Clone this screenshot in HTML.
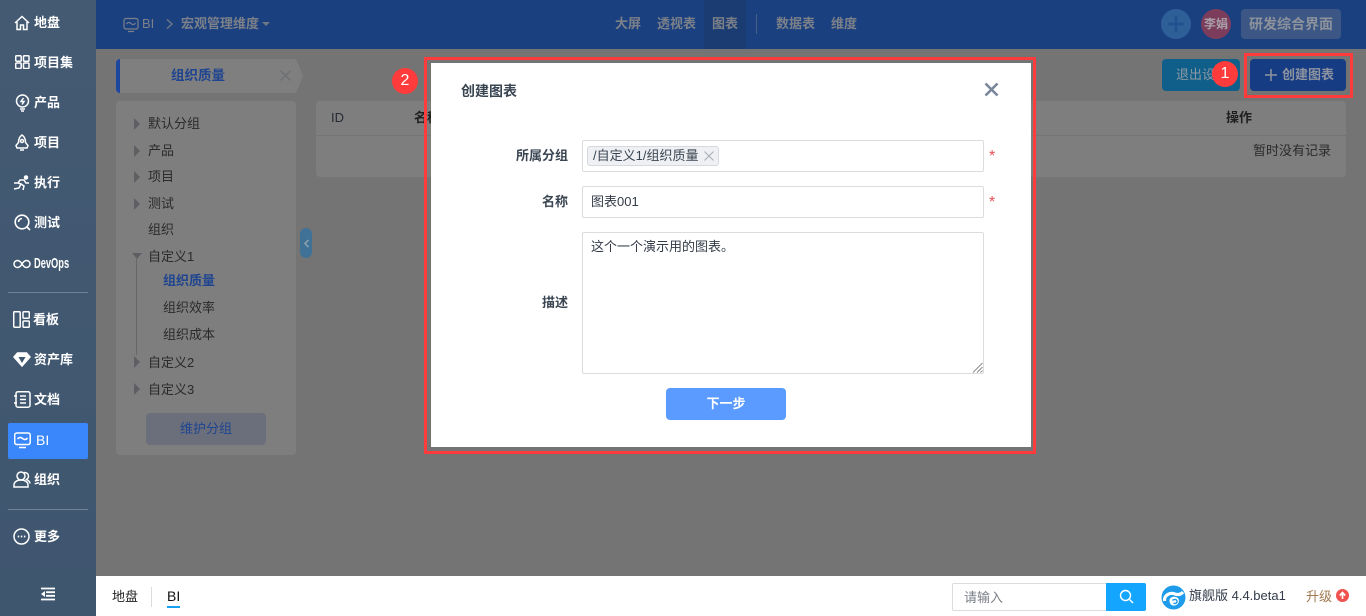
<!DOCTYPE html>
<html lang="zh"><head><meta charset="utf-8"><title>BI</title>
<style>
*{box-sizing:border-box}
html,body{margin:0;padding:0;width:1366px;height:616px;overflow:hidden;background:#747474}
body{font-family:"Liberation Sans","Noto Sans CJK SC",sans-serif;font-size:13px;color:#2b2b2b;position:relative}
.a{position:absolute;white-space:nowrap;line-height:18px}
.side{position:absolute;left:0;top:0;width:96px;height:616px;background:linear-gradient(#445a73,#3f566f)}
.n{position:absolute;left:34px;color:#fff;font-weight:bold;font-size:13px;line-height:18px;white-space:nowrap}
.side svg{position:absolute;fill:none;stroke:#fff;stroke-width:1.5}
.t{position:absolute;left:148px;color:#2a2a2a;line-height:18px;white-space:nowrap}
.arr{position:absolute;left:134px;width:0;height:0;border-left:6px solid #5d5f63;border-top:6px solid transparent;border-bottom:6px solid transparent}
.top{position:absolute;left:96px;top:0;width:1270px;height:49px;background:#1a4080}
.tn{position:absolute;top:15px;color:#7c8088;font-weight:bold;line-height:18px;white-space:nowrap}
.lbl{position:absolute;font-weight:bold;color:#3a4552;line-height:18px;white-space:nowrap;text-align:right;width:80px}
.inp{position:absolute;left:151px;width:402px;background:#fff;border:1px solid #dcdcdc;border-radius:2px}
.star{position:absolute;left:558px;color:#e8505b;font-size:16px;line-height:18px}
</style></head><body>

<div class="top"></div>
<div style="position:absolute;left:704px;top:0;width:42px;height:49px;background:#1b3c73"></div>
<svg style="position:absolute;left:123px;top:17px" width="16" height="16" viewBox="0 0 16 16" fill="none" stroke="#7c8088" stroke-width="1.2"><rect x="1" y="1.5" width="14" height="10.5" rx="2"/><path d="M3.5 7c1.5-2 3-2 4.5-.5s3 1.500 4.500-.5M5 14.500h6"/></svg>
<div class="a" style="left:142px;top:15px;color:#7c8088">BI</div>
<svg style="position:absolute;left:165px;top:18px" width="10" height="12" viewBox="0 0 10 12" fill="none" stroke="#6e7784" stroke-width="1.500"><path d="M2 1.500l5 4.500-5 4.500"/></svg>
<div class="tn" style="left:181px">宏观管理维度</div>
<div style="position:absolute;left:262px;top:22px;width:0;height:0;border-top:4px solid #6e7784;border-left:4px solid transparent;border-right:4px solid transparent"></div>
<div class="tn" style="left:615px">大屏</div>
<div class="tn" style="left:657px">透视表</div>
<div class="tn" style="left:712px">图表</div>
<div style="position:absolute;left:756px;top:14px;width:1px;height:20px;background:#47608a"></div>
<div class="tn" style="left:776px">数据表</div>
<div class="tn" style="left:831px">维度</div>
<div style="position:absolute;left:1161px;top:9px;width:30px;height:30px;border-radius:50%;background:#2e5f97"></div>
<svg style="position:absolute;left:1167px;top:15px" width="18" height="18" viewBox="0 0 18 18" stroke="#20508f" stroke-width="2.4"><path d="M9 1v16M1 9h16"/></svg>
<div style="position:absolute;left:1201px;top:9px;width:30px;height:30px;border-radius:50%;background:#7c3c5c;color:#a9a0aa;font-size:12px;font-weight:bold;line-height:30px;text-align:center">李娟</div>
<div style="position:absolute;left:1241px;top:9px;width:100px;height:30px;border-radius:4px;background:#3c5786;color:#8d929b;font-size:14px;font-weight:bold;line-height:30px;text-align:center">研发综合界面</div>

<div class="side">
<svg style="left:14px;top:15px" width="16" height="16" viewBox="0 0 16 16"><path d="M1 8l7-6.500L15 8M3 7v7.500h3.500V10h3v4.500H13V7"/></svg><div class="n" style="top:14px">地盘</div>
<svg style="left:15px;top:55px" width="15" height="14" viewBox="0 0 15 14"><rect x=".7" y=".7" width="5.500" height="5.500" rx="1"/><rect x="8.500" y=".7" width="5.500" height="5.500" rx="1"/><rect x=".7" y="8" width="5.500" height="5.500" rx="1"/><rect x="8.500" y="8" width="5.500" height="5.500" rx="1"/></svg><div class="n" style="top:54px">项目集</div>
<svg style="left:15px;top:94px" width="15" height="18" viewBox="0 0 15 18"><circle cx="7.500" cy="7" r="6"/><path d="M5 15h5M6 17h3M8.500 4L6 7.500h3L7 10.500"/></svg><div class="n" style="top:94px">产品</div>
<svg style="left:14px;top:134px" width="16" height="18" viewBox="0 0 16 18"><path d="M8 1c3 2 3.500 5 3.500 7.500l2.500 3-1 2.500H3l-1-2.500 2.500-3C4.500 6 5 3 8 1z"/><circle cx="8" cy="7" r="1.500"/><path d="M6 16h4"/></svg><div class="n" style="top:134px">项目</div>
<svg style="left:13px;top:175px" width="18" height="16" viewBox="0 0 18 16"><circle cx="13" cy="2.500" r="1.500" fill="#fff"/><path d="M1 14l5-1 2-4-3-1 2-3 4 0 2 3h3M8 9l3 2-1 4M1 8h4"/></svg><div class="n" style="top:174px">执行</div>
<svg style="left:14px;top:214px" width="17" height="17" viewBox="0 0 17 17"><circle cx="8" cy="8" r="6.800" stroke-width="1.600"/><path d="M4.500 8A3.500 3.500 0 0 1 8 4.500M12.500 12.500l3.500 3.500" stroke-width="1.600"/></svg><div class="n" style="top:214px">测试</div>
<svg style="left:13px;top:259px" width="18" height="10" viewBox="0 0 18 10"><path d="M9 5C7.500 2.500 6 1.500 4.500 1.500a3.500 3.500 0 0 0 0 7C6 8.500 7.500 7.500 9 5c1.500-2.500 3-3.500 4.500-3.500a3.500 3.500 0 0 1 0 7C12 8.500 10.500 7.500 9 5z"/></svg><div class="n" style="top:255px;font-family:'Liberation Sans',sans-serif;transform:scaleX(.62);transform-origin:0 50%;font-size:15px">DevOps</div>
<div style="position:absolute;left:8px;top:292px;width:80px;height:1px;background:#6f8296"></div>
<svg style="left:13px;top:311px" width="17" height="17" viewBox="0 0 17 17"><rect x=".7" y=".7" width="6.500" height="15.500" rx="1"/><rect x="10" y=".7" width="6.300" height="6.500" rx="1"/><rect x="10" y="10" width="6.300" height="6.300" rx="1"/></svg><div class="n" style="top:311px;left:33px">看板</div>
<svg style="left:13px;top:352px" width="18" height="15" viewBox="0 0 18 15"><path d="M4.500 1h9L17 5l-8 9L1 5z" fill="#fff"/><path d="M5.500 5h7L9 11z" fill="#3f566f" stroke="none"/></svg><div class="n" style="top:351px">资产库</div>
<svg style="left:13px;top:391px" width="18" height="17" viewBox="0 0 18 17"><rect x="3" y=".7" width="14" height="15.500" rx="2"/><path d="M7 5h6M7 8.500h6M7 12h6M1 5h3M1 12h3"/></svg><div class="n" style="top:391px">文档</div>
<div style="position:absolute;left:8px;top:423px;width:80px;height:36px;background:#3a87fc;border-radius:2px"></div>
<svg style="left:14px;top:432px" width="17" height="17" viewBox="0 0 17 17"><rect x=".7" y="1" width="15.500" height="11.500" rx="2"/><path d="M3.500 7c1.500-2 3-2 5-.5s3.500 1.500 5-.5M5 15.500h7"/></svg><div class="n" style="top:431px;left:36px;font-weight:normal;font-size:14px">BI</div>
<svg style="left:13px;top:471px" width="18" height="17" viewBox="0 0 18 17"><circle cx="8" cy="5" r="4"/><path d="M1 16v-2c0-3 3-5 7-5s7 2 7 5v2zM11 1.500c3 0 4.500 1.500 4.500 3.500 0 1.500-.5 2.500-2 3.500 2 1 3.500 2 3.500 4"/></svg><div class="n" style="top:471px">组织</div>
<div style="position:absolute;left:8px;top:509px;width:80px;height:1px;background:#6f8296"></div>
<svg style="left:13px;top:528px" width="17" height="17" viewBox="0 0 17 17"><circle cx="8.500" cy="8.500" r="7.500"/><path d="M4.700 8.500h1.500M7.800 8.500h1.500M10.900 8.500h1.500" stroke-width="1.800"/></svg><div class="n" style="top:528px">更多</div>
<svg style="left:40px;top:587px" width="16" height="14" viewBox="0 0 16 14"><path d="M1 1.500h14M6 5.200h9M6 8.800h9M1 12.500h14" stroke-width="1.800"/><path d="M5 4L1 7l4 3z" fill="#fff" stroke="none"/></svg>
</div>

<!-- tabs -->
<div style="position:absolute;left:116px;top:59px;width:187px;height:34px;background:#7f7f7f;border-radius:4px;clip-path:polygon(0 0,180px 0,100% 50%,180px 100%,0 100%)"></div>
<div style="position:absolute;left:116px;top:59px;width:4px;height:34px;background:#1d479d;border-radius:4px 0 0 4px"></div>
<div class="a" style="left:171px;top:67px;color:#1f4490;font-weight:bold;font-size:13.500px">组织质量</div>
<svg style="position:absolute;left:280px;top:70px" width="11" height="11" viewBox="0 0 11 11" stroke="#696b70" stroke-width="1"><path d="M.5.500l10 10M10.500.500l-10 10"/></svg>

<!-- tree -->
<div style="position:absolute;left:116px;top:101px;width:180px;height:354px;background:#7e7e7e;border-radius:4px"></div>
<div class="arr" style="top:118px"></div><div class="t" style="top:115px">默认分组</div>
<div class="arr" style="top:145px"></div><div class="t" style="top:142px">产品</div>
<div class="arr" style="top:171px"></div><div class="t" style="top:168px">项目</div>
<div class="arr" style="top:198px"></div><div class="t" style="top:195px">测试</div>
<div class="t" style="top:221px">组织</div>
<div style="position:absolute;left:132px;top:253px;width:0;height:0;border-top:6px solid #5d5f63;border-left:5.500px solid transparent;border-right:5.500px solid transparent"></div>
<div style="position:absolute;left:136px;top:259px;width:1px;height:96px;background:#676767"></div>
<div class="t" style="top:248px">自定义1</div>
<div class="t" style="left:163px;top:272px;color:#1f4490;font-weight:bold">组织质量</div>
<div class="t" style="left:163px;top:299px">组织效率</div>
<div class="t" style="left:163px;top:326px">组织成本</div>
<div class="arr" style="top:356px"></div><div class="t" style="top:354px">自定义2</div>
<div class="arr" style="top:383px"></div><div class="t" style="top:381px">自定义3</div>
<div style="position:absolute;left:146px;top:413px;width:120px;height:32px;background:#6b6f7b;border-radius:4px;color:#1f4490;line-height:31px;text-align:center">维护分组</div>

<div style="position:absolute;left:300px;top:228px;width:12px;height:30px;border-radius:6px;background:#3f7296"></div>
<svg style="position:absolute;left:303px;top:239px" width="7" height="9" viewBox="0 0 7 9" fill="none" stroke="#8fa2b0" stroke-width="1.500"><path d="M5.500 1L2 4.500 5.500 8"/></svg>

<!-- table -->
<div style="position:absolute;left:316px;top:101px;width:1030px;height:76px;background:#7e7e7e;border-radius:4px"></div>
<div style="position:absolute;left:316px;top:135px;width:1030px;height:1px;background:#747474"></div>
<div class="a" style="left:331px;top:109px;color:#252a33">ID</div>
<div class="a" style="left:414px;top:109px;font-weight:bold;color:#1f1f1f">名称</div>
<div class="a" style="left:1226px;top:109px;font-weight:bold;color:#1f1f1f">操作</div>
<div class="a" style="left:1253px;top:142px">暂时没有记录</div>

<!-- top right buttons -->
<div style="position:absolute;left:1162px;top:59px;width:78px;height:32px;background:#0f5f8a;border-radius:4px;color:#8c98a3;line-height:31px;padding-left:14px;overflow:hidden;white-space:nowrap">退出设计</div>
<div style="position:absolute;left:1250px;top:59px;width:96px;height:32px;background:#163c84;border-radius:4px;color:#8d939f;font-weight:bold;line-height:31px;padding-left:32px;white-space:nowrap">创建图表</div>
<svg style="position:absolute;left:1265px;top:69px" width="12" height="12" viewBox="0 0 12 12" stroke="#8d939f" stroke-width="1.500"><path d="M6 0v12M0 6h12"/></svg>
<div style="position:absolute;left:1244px;top:53px;width:109px;height:45px;border:3.500px solid #ff3b3b"></div>
<div style="position:absolute;left:1212px;top:61px;width:26px;height:26px;border-radius:50%;background:#ff3b3b;color:#fff;font-size:16px;line-height:25px;text-align:center">1</div>
<div style="position:absolute;left:392px;top:68px;width:26px;height:26px;border-radius:50%;background:#ff3b3b;color:#fff;font-size:16px;line-height:25px;text-align:center">2</div>

<!-- modal -->
<div style="position:absolute;left:424px;top:57px;width:612px;height:397px;border:3.500px solid #ff3b3b"></div>
<div style="position:absolute;left:431px;top:63px;width:600px;height:384px;background:#fff">
<div class="a" style="left:30px;top:19px;font-weight:bold;color:#3a4552;font-size:14px">创建图表</div>
<svg style="position:absolute;left:553px;top:19px" width="15" height="15" viewBox="0 0 15 15" stroke="#79879b" stroke-width="2.600"><path d="M1.500 1.500l12 12M13.500 1.500l-12 12"/></svg>
<div class="lbl" style="left:57px;top:84px">所属分组</div>
<div class="inp" style="top:77px;height:32px"></div>
<div style="position:absolute;left:156px;top:83px;width:132px;height:20px;background:#eef0f3;border:1px solid #d6d9de;border-radius:3px;color:#3a4552;line-height:18px;padding-left:5px;white-space:nowrap">/自定义1/组织质量</div>
<svg style="position:absolute;left:273px;top:88px" width="10" height="10" viewBox="0 0 10 10" stroke="#a7adb5" stroke-width="1"><path d="M.5.500l9 9M9.500.500l-9 9"/></svg>
<div class="star" style="top:85px">*</div>
<div class="lbl" style="left:57px;top:130px">名称</div>
<div class="inp" style="top:123px;height:32px;line-height:30px;padding-left:8px;color:#333b47">图表001</div>
<div class="star" style="top:131px">*</div>
<div class="lbl" style="left:57px;top:231px">描述</div>
<div class="inp" style="top:169px;height:142px;line-height:18px;padding:5px 8px;color:#333b47">这个一个演示用的图表。</div>
<svg style="position:absolute;left:541px;top:299px" width="11" height="11" viewBox="0 0 11 11" stroke="#666" stroke-width=".8"><path d="M1 10.500L10.500 1M5 10.500L10.500 5M8.500 10.500l2-2"/></svg>
<div style="position:absolute;left:235px;top:325px;width:120px;height:32px;border-radius:4px;background:#5b9bff;color:#fff;font-weight:bold;line-height:31px;text-align:center">下一步</div>
</div>

<!-- footer -->
<div style="position:absolute;left:96px;top:576px;width:1270px;height:40px;background:#fff"></div>
<div class="a" style="left:112px;top:588px;color:#222">地盘</div>
<div style="position:absolute;left:151px;top:587px;width:1px;height:20px;background:#dcdcdc"></div>
<div class="a" style="left:167px;top:587px;color:#111;font-size:14px">BI</div>
<div style="position:absolute;left:167px;top:606px;width:13px;height:2px;background:#14a1f0"></div>
<div style="position:absolute;left:952px;top:583px;width:156px;height:28px;border:1px solid #dcdcdc;border-radius:2px 0 0 2px;color:#7a7f87;line-height:28px;padding-left:11px">请输入</div>
<div style="position:absolute;left:1106px;top:583px;width:40px;height:28px;background:#14a6ff;border-radius:0 2px 2px 0"></div>
<svg style="position:absolute;left:1119px;top:589px" width="15" height="15" viewBox="0 0 15 15" fill="none" stroke="#fff" stroke-width="1.400"><circle cx="6.500" cy="6.500" r="5"/><path d="M10.500 10.500l3.500 3.500"/></svg>
<svg style="position:absolute;left:1161px;top:585px" width="25" height="25" viewBox="0 0 25 25"><circle cx="12.500" cy="12.500" r="12" fill="#1e9bea"/><path d="M3.500 16C3 10 9 7 14 9c3 1 6 .5 8-2" fill="none" stroke="#fff" stroke-width="3.200"/><path d="M8.500 15c.5-3 4.500-4 7.500-2.500 3.500 2 2 7.500-2.500 8-3 .3-5-1.500-5-5" fill="#fff"/><path d="M11.500 15.500c1-1.500 4-1.500 4.500.5s-2 3.200-3.500 2" fill="none" stroke="#1e9bea" stroke-width="1.400"/></svg>
<div class="a" style="left:1189px;top:587px;color:#333b4a;font-size:13px">旗舰版 4.4.beta1</div>
<div class="a" style="left:1306px;top:588px;color:#a0784f">升级</div>
<svg style="position:absolute;left:1336px;top:589px" width="13" height="13" viewBox="0 0 13 13"><circle cx="6.500" cy="6.500" r="6.500" fill="#f0524f"/><path d="M6.500 10V4M3.800 6.500l2.700-3 2.700 3" fill="none" stroke="#fff" stroke-width="1.700"/></svg>
</body></html>
